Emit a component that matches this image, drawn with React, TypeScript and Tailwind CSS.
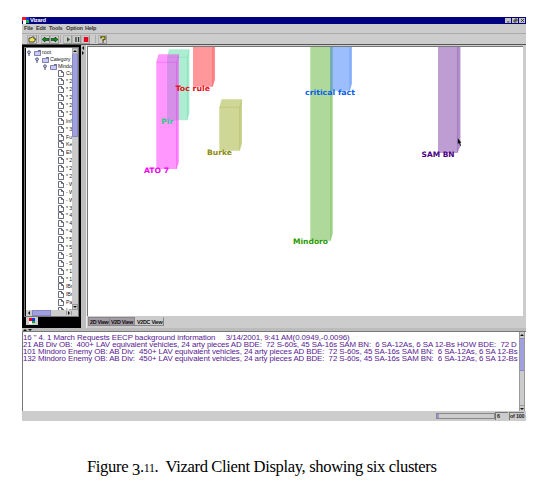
import React from "react";

type Cluster = {
  name: string;
  color: string;
  edge: string;
  label: string;
  x: number;
  right: number;
  top: number;
  bottom: number;
  depth: number;
  tx: number;
  ty: number;
  width: number;
};

const clusters: Cluster[] = [
  { name: "Pir", color: "#5cdea5", edge: "#3fcf94", label: "#35c98a", x: 167, right: 187.3, top: 57.3, bottom: 120.2, depth: 2, tx: 161, ty: 123.8, width: 12.5 },
  { name: "ATO 7", color: "#ff30ff", edge: "#e010e0", label: "#f000f0", x: 156.3, right: 176.6, top: 62.3, bottom: 169, depth: 2.2, tx: 144, ty: 172.6, width: 25 },
  { name: "Toc rule", color: "#ff3038", edge: "#ee2530", label: "#e80c18", x: 193, right: 212.7, top: 40, bottom: 86.8, depth: 2.2, tx: 175.5, ty: 90.8, width: 34.5 },
  { name: "Burke", color: "#a0b030", edge: "#99a830", label: "#8c8c10", x: 219.3, right: 239.6, top: 107.3, bottom: 150.8, depth: 2.3, tx: 207, ty: 154.6, width: 25 },
  { name: "Mindoro", color: "#5db338", edge: "#48a828", label: "#279c00", x: 310.3, right: 330.6, top: 40, bottom: 240.8, depth: 2.1, tx: 293, ty: 244.4, width: 35 },
  { name: "critical fact", color: "#3c7dfa", edge: "#3a7ae8", label: "#0a60e8", x: 330.4, right: 349.8, top: 40, bottom: 90.8, depth: 2.1, tx: 305, ty: 95, width: 50 },
  { name: "SAM BN", color: "#7c3ca6", edge: "#7830a8", label: "#4b0082", x: 438, right: 457.4, top: 40, bottom: 153, depth: 3, tx: 421.6, ty: 157, width: 33 },
];

const leaves = [
  "Cu", "* 2", "* 2", "* 2", "* 2", "* 2", "Inf", "* 3", "Fu", "Ke", "EN", "* 2", "* 2", "* 2", "- W", "- W",
  "- W", "* 3", "* 4", "* 4", "* 4", "* 5", "* 5", "- S", "- S", "* 1", "* 1", "IBr", "IBr", "Pa", "Lo",
];

const lines = [
  '16 " 4. 1 March Requests EECP background information     3/14/2001, 9:41 AM(0.0949,-0.0096)',
  "21 AB Div OB:  400+ LAV equivalent vehicles, 24 arty pieces AD BDE:  72 S-60s, 45 SA-16s SAM BN:  6 SA-12As, 6 SA 12-Bs HOW BDE:  72 D",
  "101 Mindoro Enemy OB: AB Div:  450+ LAV equivalent vehicles, 24 arty pieces AD BDE:  72 S-60s, 45 SA-16s SAM BN:  6 SA-12As, 6 SA 12-Bs",
  "132 Mindoro Enemy OB: AB Div:  450+ LAV equivalent vehicles, 24 arty pieces AD BDE:  72 S-60s, 45 SA-16s SAM BN:  6 SA-12As, 6 SA 12-Bs",
];

function Prism({ c }: { c: Cluster }) {
  const { x, right: r, top: t, bottom: b, depth: d } = c;
  return (
    <g fill={c.color} fillOpacity="0.5">
      <path d={`M${x} ${t}L${x + d} ${t - 8}H${r + d}V${b - 7}L${r} ${b}H${x}Z`} />
      <path d={`M${r} ${t}L${r + d} ${t - 8}V${b - 7}L${r} ${b}Z`} fillOpacity="0.16" />
      <path d={`M${x} ${t}H${r}V${b}M${r} ${t}L${r + d} ${t - 8}`} fill="none" stroke={c.edge} strokeOpacity="0.35" strokeWidth="0.7" />
    </g>
  );
}

function Triangle({ dir }: { dir: "up" | "down" | "left" | "right" }) {
  const paths = { up: "M0 3L2 1L4 3Z", down: "M0 1L2 3L4 1Z", left: "M3 0L1 2L3 4Z", right: "M1 0L3 2L1 4Z" };
  return (
    <svg viewBox="0 0 4 4" className="h-1 w-1 shrink-0"><path d={paths[dir]} fill="#111" /></svg>
  );
}

function Folder({ name, indent }: { name: string; indent: string }) {
  return (
    <div className={`flex h-[7px] shrink-0 items-center whitespace-nowrap ${indent}`}>
      <svg viewBox="0 0 5 6" className="mr-[2px] h-[6px] w-[5px] shrink-0">
        <circle cx="2" cy="2.2" r="1.4" fill="#c3c8ea" stroke="#454773" strokeWidth=".8" />
        <path d="M2 3.5V6" stroke="#454773" />
      </svg>
      <svg viewBox="0 0 7 6" className="mr-px h-[6px] w-[7px] shrink-0">
        <path d="M.5 1.5H3.6L4.3.5H6.5V5.5H.5Z" fill="#c8c9f5" stroke="#55578c" strokeWidth=".7" />
        <path d="M4 1H6.7" stroke="#444879" />
      </svg>
      <span>{name}</span>
    </div>
  );
}

function Separator() {
  return <span className="ml-px mr-[2px] h-[8px] w-px bg-[#aaa]" />;
}

function ToolButton({ children, width }: { children: React.ReactNode; width: string }) {
  return (
    <span className={`flex h-[9px] items-center justify-center border border-[#b1b1b1] border-b-[#999] border-r-[#999] ${width}`}>
      <svg viewBox="0 0 8 7" className="h-[7px] w-[8px] shrink-0">{children}</svg>
    </span>
  );
}

function TitleButton({ path }: { path: string }) {
  return (
    <span className="flex h-[5px] w-[6px] items-center justify-center bg-[#c3c3c3]">
      <svg viewBox="0 0 5 5" className="h-[5px] w-[5px] shrink-0"><path d={path} fill="none" stroke="#222" strokeWidth=".8" /></svg>
    </span>
  );
}

function TitleBar() {
  return (
    <div className="flex h-[7px] shrink-0 items-center bg-[#000080] pr-px text-[5.8px] font-bold leading-[7px] text-white">
      <svg viewBox="0 0 7 7" className="mr-px h-[7px] w-[7px]">
        <path d="M0 0H4V4H0Z" fill="#f21a28" /><path d="M4 0H7V3H4Z" fill="#2030ee" />
        <path d="M1 3H4V7H1Z" fill="#fff" /><path d="M4 3H7V6H4Z" fill="#08be38" />
      </svg>
      <span className="tracking-[-0.25px]">Vizard</span>
      <span className="ml-auto flex gap-px">
        <TitleButton path="M1 4H3.5" />
        <TitleButton path="M2 1H4V3M1 2H3V4H1Z" />
        <TitleButton path="M1 1L4 4M4 1L1 4" />
      </span>
    </div>
  );
}

function Toolbar() {
  return (
    <div className="flex h-[11px] shrink-0 items-center border-t border-[#aaa] pl-[5px]">
      <ToolButton width="w-[10px]"><path d="M1 6V2H3L4 1H6V3H8L6 6Z" fill="#eee45e" stroke="#292918" strokeWidth=".8" /></ToolButton>
      <Separator />
      <ToolButton width="w-[9px]"><path d="M0 3.5L3 1V2.5H7V4.5H3V6Z" fill="#078e18" stroke="#122612" strokeWidth=".6" /></ToolButton>
      <ToolButton width="w-[9px]"><path d="M7 3.5L4 1V2.5H0V4.5H4V6Z" fill="#078e18" stroke="#122612" strokeWidth=".6" /></ToolButton>
      <Separator />
      <ToolButton width="w-[9px]"><path d="M3 1L6 3.5L3 6Z" fill="#35552f" /></ToolButton>
      <ToolButton width="w-[9px]"><path d="M2.3 1H3.6V6H2.3ZM4.9 1H6.2V6H4.9Z" fill="#26382b" /></ToolButton>
      <ToolButton width="w-[9px]"><path d="M1.8 1H6.3V6H1.8Z" fill="#e70018" /></ToolButton>
      <span className="w-[4px]" />
      <Separator />
      <ToolButton width="w-[9px]"><path d="M2 2.5V1H6V3L4 4V5M3.5 6H4.8" fill="none" stroke="#514e00" strokeWidth="1.3" /><path d="M3 1.5H5V3" fill="none" stroke="#e5d700" strokeWidth=".7" /></ToolButton>
    </div>
  );
}

function Sidebar() {
  return (
    <div className="flex w-[59px] shrink-0 flex-col bg-black pb-[3px] pl-[2px] pt-[2px]">
      <div className="flex h-[270px] w-[55px] flex-col border border-[#777] pl-px">
        <div className="flex h-[262px] bg-white">
          <div className="w-[46px] overflow-hidden pt-px text-[5.3px] leading-[7px] text-[#222]">
            <Folder name="root" indent="pl-px" />
            <Folder name="Category" indent="pl-[9px] tracking-[-0.15px]" />
            <Folder name="Mindo" indent="pl-[17px] tracking-[-0.15px]" />
            {leaves.map((leaf, i) => (
              <div key={i} className="flex h-[7.9px] items-center whitespace-pre pl-[32px]">
                <svg viewBox="0 0 6 7" className="mr-[2px] h-[7px] w-[6px] shrink-0">
                  <path d="M.5.5H3.5L5.5 2.5V6.5H.5ZM3.5.5V2.5H5.5" fill="#fff" stroke="#44465d" strokeWidth=".8" />
                </svg>
                <span className="tracking-[-0.1px]">{leaf}</span>
              </div>
            ))}
          </div>
          <div className="flex w-[6px] flex-col bg-[#c9c9c9]">
            <span className="flex h-[6px] items-center justify-center border border-[#aaa]"><Triangle dir="up" /></span>
            <span className="h-[83px] border-x border-b border-[#8887c2] bg-[#a0a0de]" />
            <span className="mt-auto flex h-[6px] items-center justify-center border border-[#999]"><Triangle dir="down" /></span>
          </div>
        </div>
        <div className="flex h-[6px] items-center bg-[#ccc]">
          <span className="flex w-[6px] justify-center"><Triangle dir="left" /></span>
          <span className="h-[6px] w-[19px] border border-[#8887c2] bg-[#a0a0de]" />
          <span className="ml-auto mr-[6px] flex w-[6px] justify-center border-x border-[#999]"><Triangle dir="right" /></span>
        </div>
      </div>
      <div className="ml-[2px] flex h-[8px] w-[12px] items-center justify-center bg-[#ccc]">
        <svg viewBox="0 0 6 6" className="h-[6px] w-[6px]">
          <path d="M0 0H3V3H0Z" fill="#e8001c" /><path d="M3 0H6V3H3Z" fill="#2030e8" />
          <path d="M0 3H3V6H0Z" fill="#fff" /><path d="M3 3H6V5H3Z" fill="#00ac24" />
        </svg>
      </div>
    </div>
  );
}

function ClusterView() {
  return (
    <div className="flex min-w-0 flex-1 flex-col pr-[3px] pt-px">
      <div className="h-[270px] border-l border-t border-[#777] bg-white">
        <svg viewBox="88 47 434 269" className="h-[269px] w-[434px]">
          {clusters.map((c) => <Prism key={c.name} c={c} />)}
          <g fontFamily="'DejaVu Sans', sans-serif" fontWeight="bold" fontSize="7.4">
            {clusters.map((c) => (
              <text key={c.name} x={c.tx} y={c.ty} fill={c.label} textLength={c.width} lengthAdjust="spacingAndGlyphs">{c.name}</text>
            ))}
          </g>
          <path d="M457.8 138.2V144L459 143L460.2 146L461 145.5L460 142.8H461.5Z" fill="#111" />
        </svg>
      </div>
      <div className="flex h-[10px] pl-px pt-px text-[5.4px] leading-[8px] text-[#111]">
        <span className="h-[9px] w-[22px] whitespace-nowrap border border-[#888] bg-[#a49aa5] pl-px font-bold tracking-[-0.3px]">2D View</span>
        <span className="h-[9px] w-[25px] whitespace-nowrap border border-l-0 border-[#888] bg-[#a49aa5] pl-px font-bold tracking-[-0.3px]">V2D View</span>
        <span className="h-[9px] w-[29px] whitespace-nowrap border border-l-0 border-[#888] border-t-[#ccc] pl-[2px] font-bold tracking-[-0.3px]">V2DC View</span>
      </div>
    </div>
  );
}

function MessagePane() {
  return (
    <div className="flex h-[80px] shrink-0 border-l border-t border-[#777] bg-white">
      <div className="w-[496px] overflow-hidden pt-[2px] text-[7.9px] leading-[7.2px] tracking-[-0.09px] text-[#57188f]">
        {lines.map((line) => (
          <div key={line} className="h-[7.15px] whitespace-pre">{line}</div>
        ))}
      </div>
      <div className="flex w-[6px] flex-col border-x border-[#999] bg-[#ccc]">
        <span className="flex h-[6px] items-center justify-center"><Triangle dir="up" /></span>
        <span className="h-[33px] border-y border-[#8887c2] bg-[#a0a0de]" />
        <span className="mt-auto flex h-[6px] items-center justify-center border-t border-[#999]"><Triangle dir="down" /></span>
      </div>
    </div>
  );
}

export default function App() {
  return (
    <main className="h-[491px] w-[546px] overflow-hidden bg-white pl-[22px] pt-[17px] font-['Liberation_Sans',sans-serif]">
      <section className="flex h-[404px] w-[504px] flex-col bg-[#ccc]">
        <TitleBar />
        <nav className="flex h-[9px] shrink-0 items-center pl-[2px] text-[5.5px] font-bold leading-[9px] tracking-[-0.15px] text-[#333]">
          <span className="w-[12px]">File</span><span className="w-[13px]">Edit</span><span className="w-[17px]">Tools</span><span className="w-[19px]">Option</span><span>Help</span>
        </nav>
        <Toolbar />
        <div className="flex h-[284px] shrink-0 border-t border-[#555]">
          <Sidebar />
          <div className="flex w-[6px] shrink-0 flex-col items-start gap-px border-r border-[#eee] bg-[#bebebe] pt-px">
            <Triangle dir="left" /><Triangle dir="right" />
          </div>
          <ClusterView />
        </div>
        <div className="flex h-[3px] shrink-0 items-center gap-px bg-[#bcbcbc] pl-px">
          <Triangle dir="up" /><Triangle dir="down" />
        </div>
        <MessagePane />
        <footer className="flex h-[10px] shrink-0 items-center justify-end pr-[2px] text-[5.4px] font-bold text-[#222]">
          <span className="h-[6px] w-[59px] border border-[#888]"><span className="block h-[4px] w-[2px] bg-[#9999da]" /></span>
          <span className="mr-px h-[8px] w-[13px] border-l border-t border-[#777] pl-px leading-[7px]">6</span>
          <span className="h-[8px] w-[15px] whitespace-nowrap border-l border-t border-[#777] leading-[7px] tracking-[-0.2px]">of 100</span>
        </footer>
      </section>
      <p className="ml-[65px] mt-[35px] whitespace-pre font-['Liberation_Serif',serif] text-[16.6px] leading-[22px] tracking-[-0.36px] text-black">Figure <span className="relative top-[3px]">3</span>.<span className="text-[12px]">11</span>.  Vizard Client Display, showing six clusters</p>
    </main>
  );
}
